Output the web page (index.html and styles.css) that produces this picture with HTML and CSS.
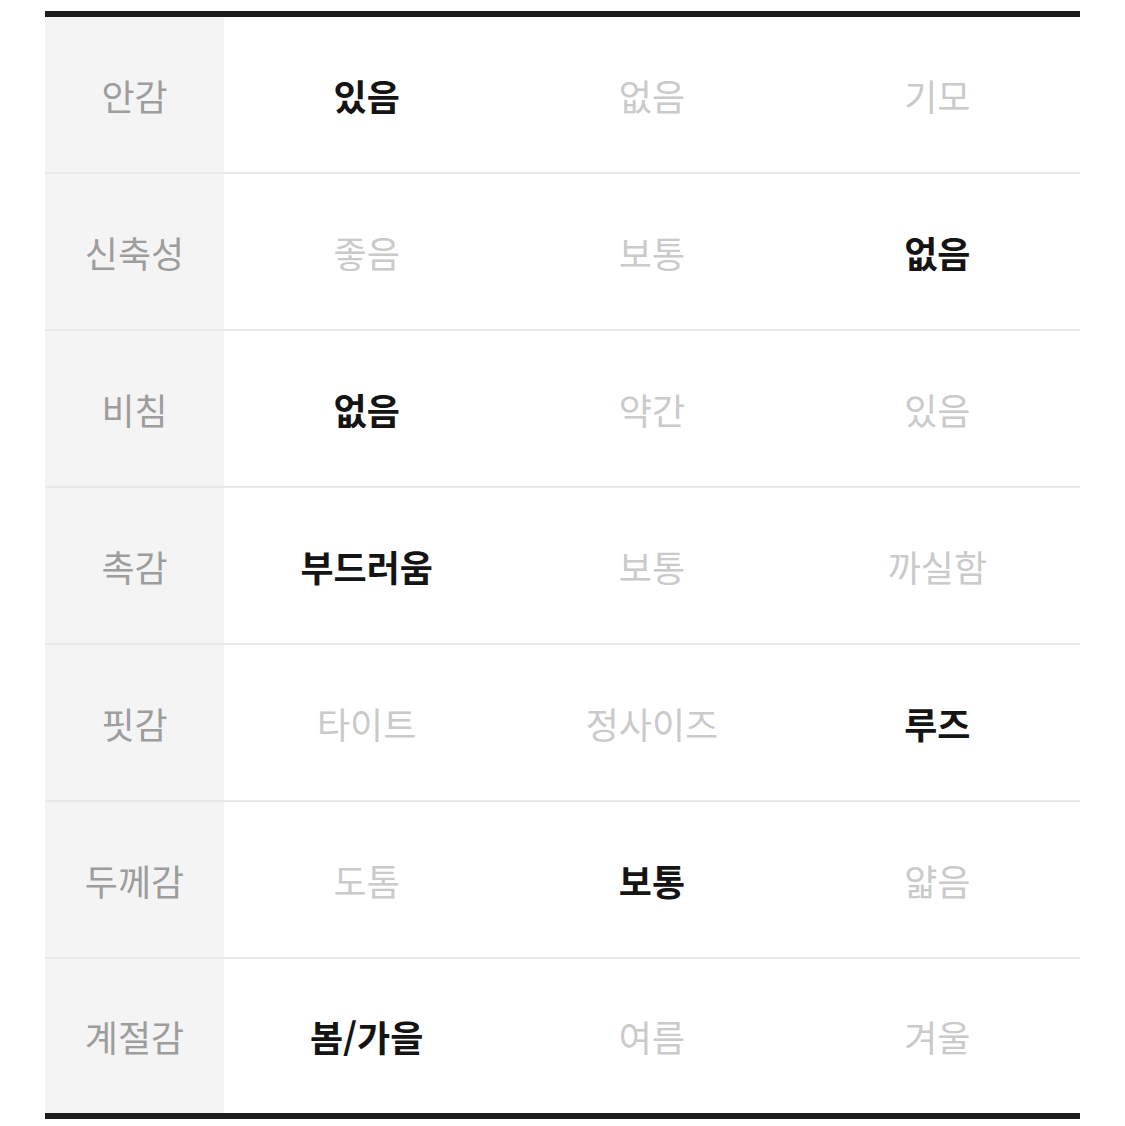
FILE: index.html
```html
<!DOCTYPE html>
<html lang="ko">
<head>
<meta charset="utf-8">
<link rel="stylesheet" href="styles.css">
</head>
<body>
<div class="spec">
  <div class="row"><div class="label">안감</div><div class="opt on">있음</div><div class="opt">없음</div><div class="opt">기모</div></div>
  <div class="row"><div class="label">신축성</div><div class="opt">좋음</div><div class="opt">보통</div><div class="opt on">없음</div></div>
  <div class="row"><div class="label">비침</div><div class="opt on">없음</div><div class="opt">약간</div><div class="opt">있음</div></div>
  <div class="row"><div class="label">촉감</div><div class="opt on">부드러움</div><div class="opt">보통</div><div class="opt">까실함</div></div>
  <div class="row"><div class="label">핏감</div><div class="opt">타이트</div><div class="opt">정사이즈</div><div class="opt on">루즈</div></div>
  <div class="row"><div class="label">두께감</div><div class="opt">도톰</div><div class="opt on">보통</div><div class="opt">얇음</div></div>
  <div class="row"><div class="label">계절감</div><div class="opt on">봄/가을</div><div class="opt">여름</div><div class="opt">겨울</div></div>
</div>
</body>
</html>
```
FILE: styles.css
```css
html, body {
  margin: 0;
  background: #fff;
}
body {
  padding: 11px 45px 0;
  font-family: "Noto Sans CJK KR", "Noto Sans", sans-serif;
}
.spec {
  border-top: 6px solid #1c1c1c;
  border-bottom: 6px solid #1c1c1c;
}
.row {
  display: grid;
  grid-template-columns: 179px repeat(3, 1fr);
  height: 155px;
  border-bottom: 2px solid #e9e9e9;
}
.row:last-child {
  border-bottom: none;
  height: 154px;
}
.label, .opt {
  display: flex;
  align-items: center;
  justify-content: center;
  font-size: 36px;
}
.label {
  background: #f4f4f4;
  color: #9d9d9d;
}
.opt {
  color: #cacaca;
}
.opt.on {
  color: #141414;
  font-weight: 700;
}
```
